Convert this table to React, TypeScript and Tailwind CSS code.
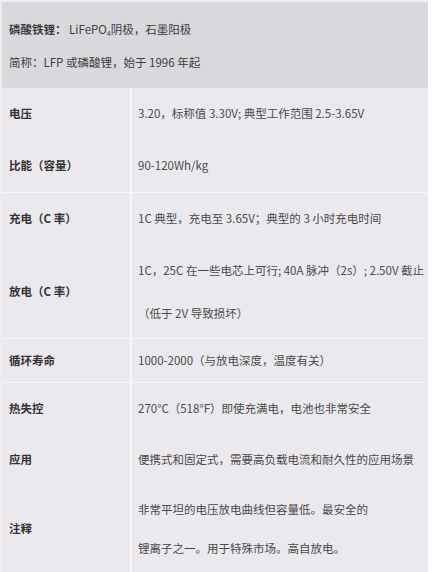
import React from "react";

const font = { fontFamily: '"Noto Sans CJK SC", "Liberation Sans", sans-serif' };

function Row({ label, h, children }: { label: string; h: string; children: React.ReactNode }) {
  return (
    <div className={`flex ${h}`}>
      <div className="w-[128px] flex items-center pl-[7px] font-bold text-[#333333]">{label}</div>
      <div className="w-[2px] bg-[#f8f7fa]" />
      <div className="flex-1 flex flex-col justify-center pl-[6px] text-[#4a4a4a] whitespace-nowrap">{children}</div>
    </div>
  );
}

function Sep() {
  return <div className="h-px bg-[#f6f5f8]" />;
}

export default function App() {
  return (
    <div className="w-[436px] h-[572px] bg-white overflow-hidden text-[11.5px]" style={font}>
      <div className="w-[428px] h-full bg-[#eeeeef] pl-[2px] pt-[2px]">
        <div className="w-[426px] h-[86px] bg-[#d9d8dc] flex flex-col justify-center pl-[7px] gap-[17px] text-[#3d3d3d]">
          <div className="h-[16px] leading-[16px]">
            <span className="font-bold">磷酸铁锂：</span>
            <span> LiFePO<span className="text-[7px] align-[-2px]">4</span>阴极，石墨阳极</span>
          </div>
          <div className="h-[16px] leading-[16px]">简称：LFP 或磷酸锂，始于 1996 年起</div>
        </div>
        <div className="w-[426px] bg-[#ebe9ee] h-[484px] flex flex-col">
          <Row label="电压" h="h-[52px]">3.20，标称值 3.30V; 典型工作范围 2.5-3.65V</Row>
          <Row label="比能（容量）" h="h-[52px]">90-120Wh/kg</Row>
          <Sep />
          <Row label="充电（C 率）" h="h-[52px]">1C 典型，充电至 3.65V；典型的 3 小时充电时间</Row>
          <Row label="放电（C 率）" h="h-[93px]">
            <div className="leading-[43px]">1C，25C 在一些电芯上可行; 40A 脉冲（2s）; 2.50V 截止</div>
            <div className="leading-[43px]">（低于 2V 导致损坏）</div>
          </Row>
          <Sep />
          <Row label="循环寿命" h="h-[43px]">1000-2000（与放电深度，温度有关）</Row>
          <Sep />
          <Row label="热失控" h="h-[51px]">270°C（518°F）即使充满电，电池也非常安全</Row>
          <Row label="应用" h="h-[52px]">便携式和固定式，需要高负载电流和耐久性的应用场景</Row>
          <Row label="注释" h="h-[86px]">
            <div className="leading-[39px]">非常平坦的电压放电曲线但容量低。最安全的</div>
            <div className="leading-[39px]">锂离子之一。用于特殊市场。高自放电。</div>
          </Row>
        </div>
      </div>
    </div>
  );
}
